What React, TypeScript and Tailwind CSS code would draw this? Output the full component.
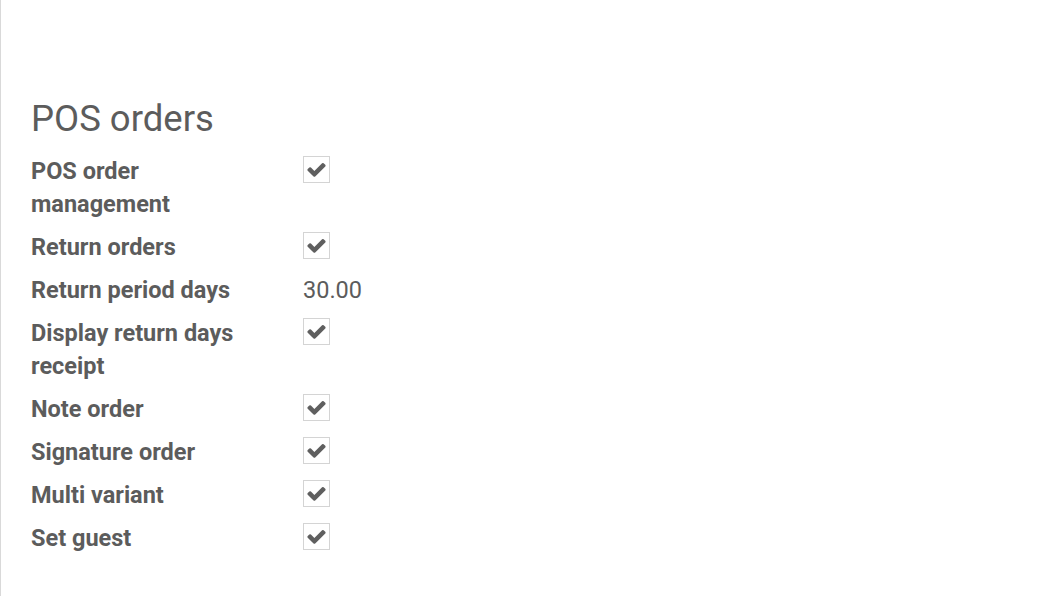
type Row = { label: string; value: boolean | string };

const rows: Row[] = [
    { label: "POS order management", value: true },
    { label: "Return orders", value: true },
    { label: "Return period days", value: "30.00" },
    { label: "Display return days receipt", value: true },
    { label: "Note order", value: true },
    { label: "Signature order", value: true },
    { label: "Multi variant", value: true },
    { label: "Set guest", value: true },
];

// font-awesome 4 style check
const CheckBox = () => (
    <span className="mt-[1px] flex h-[27px] w-[27px] items-center justify-center border border-[#d4d4d4] bg-white">
        <svg viewBox="0 0 1792 1792" className="h-[21px] w-[21px] fill-[#5f5f5f]">
            <path d="M1671 566q0 40-28 68l-724 724-136 136q-28 28-68 28t-68-28l-136-136-362-362q-28-28-28-68t28-68l136-136q28-28 68-28t68 28l294 295 656-657q28-28 68-28t68 28l136 136q28 28 28 68z" />
        </svg>
    </span>
);

export default function App() {
    return (
        <div
            className="h-[596px] w-[1039px] border-l border-[#d9d9d9] bg-white pl-[30px] pt-[99px] text-[#5c5c5c]"
            style={{ fontFamily: "Roboto, 'Liberation Sans', sans-serif" }}
        >
            <h1 className="mb-[11px] text-[36.5px] leading-[40px] font-normal">POS orders</h1>
            <div className="flex flex-col">
                {rows.map((r) => (
                    <div key={r.label} className="flex py-[5px]">
                        <div className="w-[272px] pr-[36px] text-[23.5px] leading-[33px] font-bold">{r.label}</div>
                        <div className="flex-1 text-[23.5px] leading-[33px]">
                            {typeof r.value === "string" ? r.value : <CheckBox />}
                        </div>
                    </div>
                ))}
            </div>
        </div>
    );
}
